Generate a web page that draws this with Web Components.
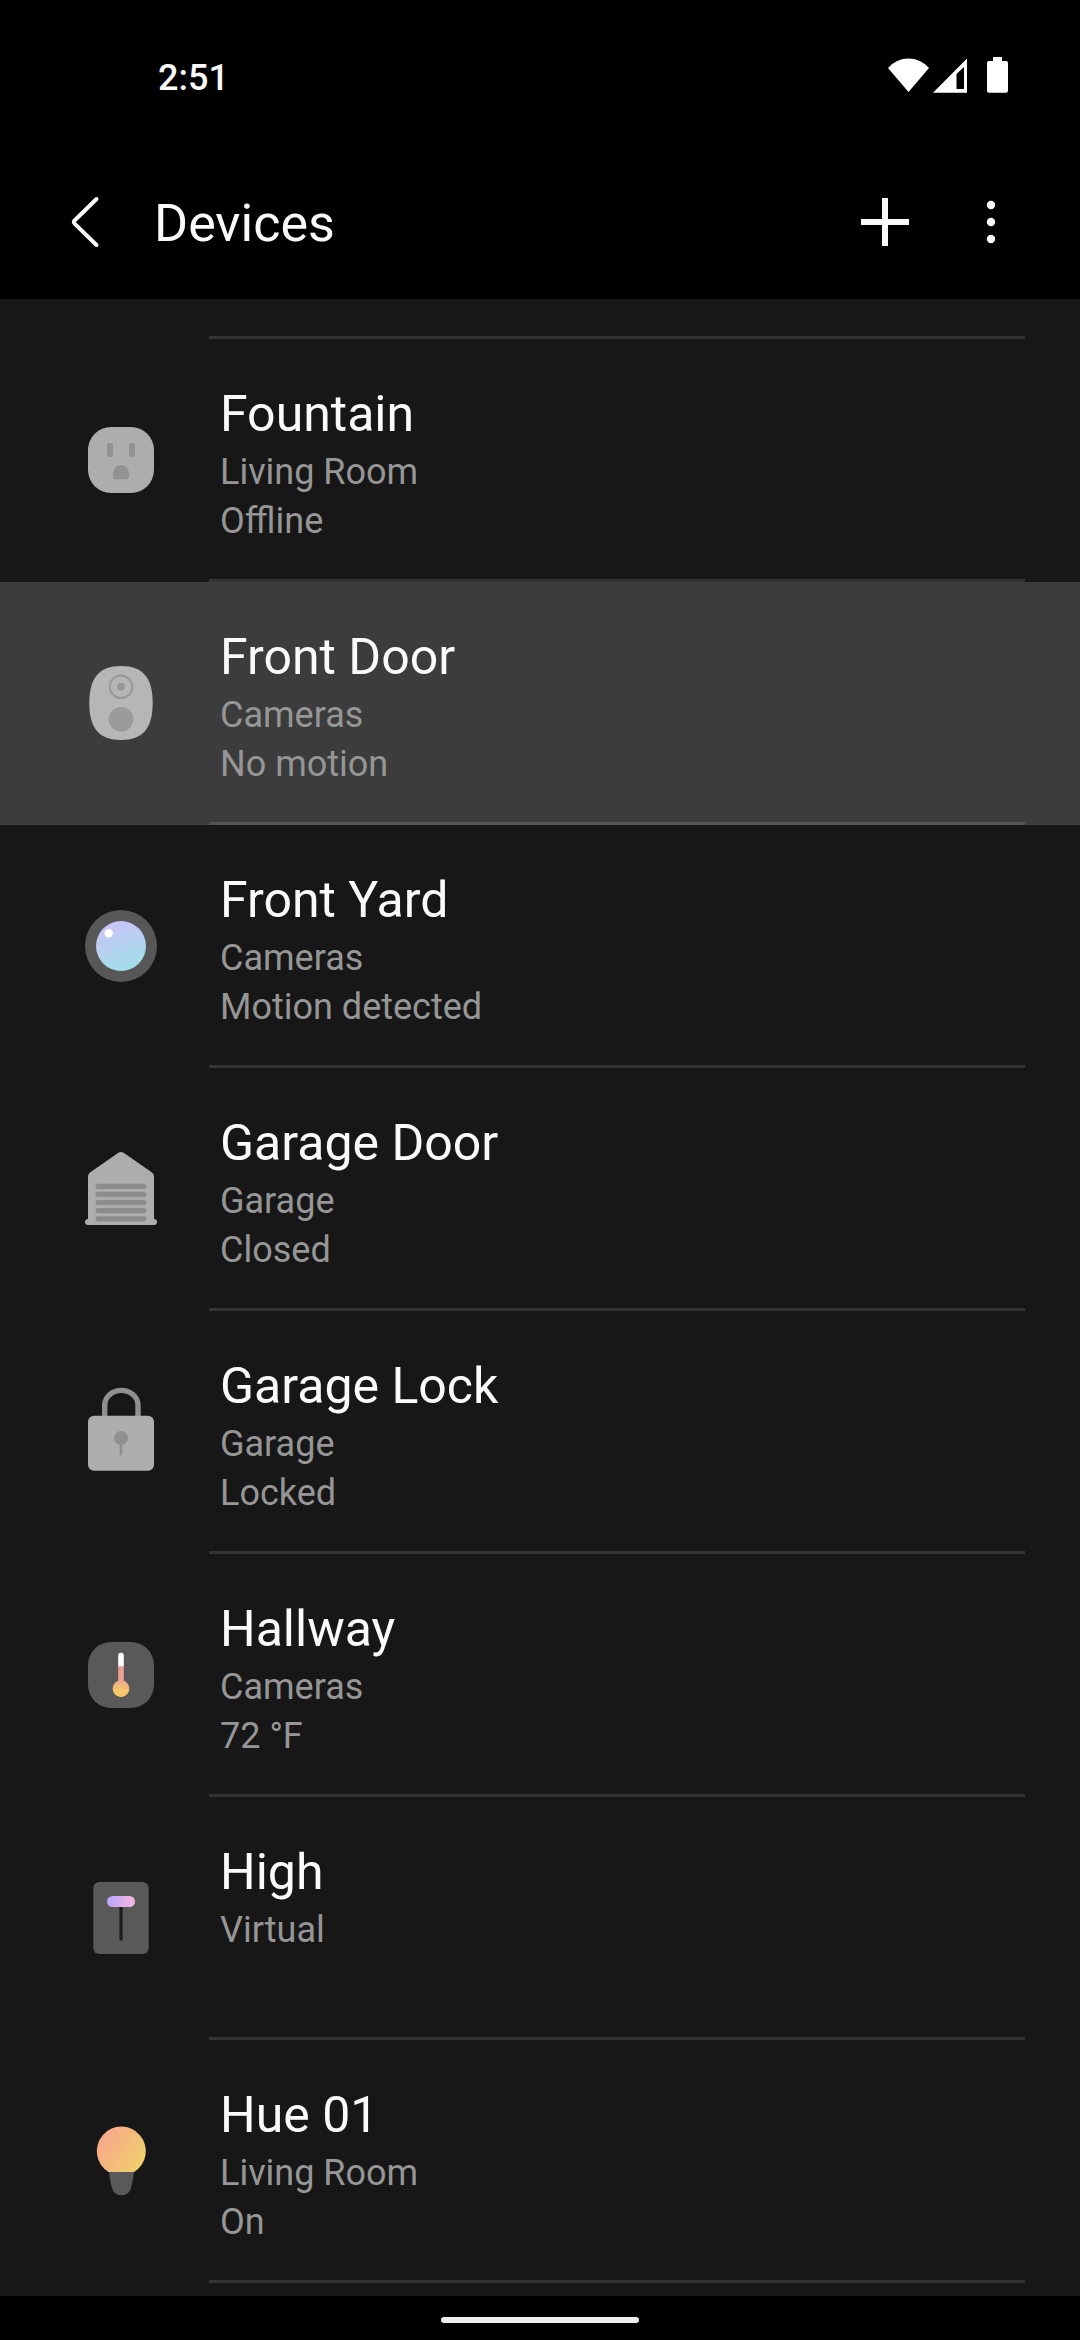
<!DOCTYPE html>
<html lang="en">
<head>
<meta charset="utf-8">
<meta name="viewport" content="width=device-width, initial-scale=1">
<title>Devices</title>
<style>
  body {
    margin: 0;
    background: #000;
    color: #fafafa;
    font-family: Roboto, "Liberation Sans", sans-serif;
  }
</style>
</head>
<body>
<devices-screen>
  <status-bar slot="status">2:51</status-bar>
  <app-header slot="header">Devices</app-header>
  <device-row icon="outlet">Fountain<span slot="room">Living Room</span><span slot="state">Offline</span></device-row>
  <device-row icon="doorbell" pressed>Front Door<span slot="room">Cameras</span><span slot="state">No motion</span></device-row>
  <device-row icon="camera">Front Yard<span slot="room">Cameras</span><span slot="state">Motion detected</span></device-row>
  <device-row icon="garage">Garage Door<span slot="room">Garage</span><span slot="state">Closed</span></device-row>
  <device-row icon="lock">Garage Lock<span slot="room">Garage</span><span slot="state">Locked</span></device-row>
  <device-row icon="thermometer">Hallway<span slot="room">Cameras</span><span slot="state">72 °F</span></device-row>
  <device-row icon="dimmer">High<span slot="room">Virtual</span></device-row>
  <device-row icon="bulb">Hue 01<span slot="room">Living Room</span><span slot="state">On</span></device-row>
</devices-screen>

<script>
/*
 * Device icons, all drawn on an 84 x 84 canvas.
 */
const ICONS = {
  outlet: `
    <rect x="9" y="9" width="66" height="66" rx="23" fill="#adadad"/>
    <rect x="28" y="25" width="6" height="14" rx="2" fill="#929292"/>
    <rect x="50" y="25" width="6" height="14" rx="2" fill="#929292"/>
    <path d="M34 59v-3.500a8 8.500 0 0 1 16 0V59q0 2.300-2.300 2.300H36.300Q34 61.300 34 59z" fill="#929292"/>`,
  doorbell: `
    <path d="M42 5c22 0 31.700 12 31.700 37S64 79 42 79 10.300 67 10.300 42 20 5 42 5z" fill="#b6b6b6"/>
    <circle cx="42" cy="25.700" r="11.300" fill="none" stroke="#989898" stroke-width="2"/>
    <circle cx="42" cy="25.700" r="4" fill="#989898"/>
    <circle cx="42" cy="58.300" r="12.300" fill="#9b9b9b"/>`,
  camera: `
    <linearGradient id="lens" x1=".3" y1="0" x2=".7" y2="1">
      <stop offset="0" stop-color="#cbc3f8"/><stop offset="1" stop-color="#9fe0e8"/>
    </linearGradient>
    <circle cx="42" cy="42" r="36" fill="#575757"/>
    <circle cx="42" cy="42" r="25" fill="url(#lens)"/>
    <circle cx="29.700" cy="29.300" r="4.200" fill="#fff"/>`,
  garage: `
    <path d="M39 6q3-2 6 0l28 19.500q2 1.500 2 4V72q3 0 3 3t-3 3H9q-3 0-3-3t3-3V29.500q0-2.500 2-4z" fill="#adadad"/>
    <path d="M19 39.300h46M19 47.400h46M19 55.500h46M19 63.600h46M19 71.800h46" stroke="#8d8d8d" stroke-width="5.200" stroke-linecap="round"/>`,
  lock: `
    <path d="M25.700 30V15a16.400 14.400 0 0 1 33.300 0v15" fill="none" stroke="#8f8f8f" stroke-width="5.400"/>
    <rect x="9" y="25.700" width="66" height="55" rx="6" fill="#aeaeae"/>
    <circle cx="42" cy="48" r="7" fill="#919191"/>
    <path d="M42 50v14" stroke="#919191" stroke-width="3" stroke-linecap="round"/>`,
  thermometer: `
    <linearGradient id="heat" x1="0" y1="0" x2="0" y2="1">
      <stop offset="0" stop-color="#e99a9d"/><stop offset=".45" stop-color="#eda58f"/><stop offset=".8" stop-color="#f7c86a"/>
    </linearGradient>
    <rect x="9" y="9" width="66" height="66" rx="23" fill="#595959"/>
    <path d="M39.200 34V22.500a2.800 2.800 0 0 1 5.600 0V34z" fill="#fff"/>
    <path d="M39.200 33.300h5.600v14.500a8.300 8.300 0 1 1-5.600 0z" fill="url(#heat)"/>`,
  dimmer: `
    <linearGradient id="knob">
      <stop offset="0" stop-color="#b9a4fd"/><stop offset="1" stop-color="#f6b8e2"/>
    </linearGradient>
    <rect x="14.300" y="6" width="55.400" height="72" rx="6" fill="#595959"/>
    <path d="M42 26v37" stroke="#1d1d1d" stroke-width="3.200" stroke-linecap="round"/>
    <rect x="28" y="20" width="28" height="11" rx="5.500" fill="url(#knob)"/>`,
  bulb: `
    <linearGradient id="glow" x1="0" y1=".2" x2="1" y2=".8">
      <stop offset="0" stop-color="#f8a58c"/><stop offset="1" stop-color="#efd06c"/>
    </linearGradient>
    <path d="M29.500 53a24.500 24.500 0 1 1 25.600 0z" fill="url(#glow)"/>
    <path d="M30 53h25q-1.500 12-3.500 17.500-2.300 5.800-9 5.800t-9-5.800Q31.500 65 30 53z" fill="#595959"/>`
}

/**
 * Base class that clones its markup into an open shadow root.
 */
class BaseElement extends HTMLElement {
  /**
   * Creates an instance of the current type.
   */
  constructor () {
    super()

    const template = document.createElement('template')
    template.innerHTML = this.constructor.markup
    this.attachShadow({ mode: 'open' })
      .appendChild(template.content.cloneNode(true))
  }
}

/*
 * The whole screen: status, header, scrolling list and gesture bar.
 */
customElements.define('devices-screen',
  class extends BaseElement {
    static markup = `
      <style>
        :host {
          display: flex;
          flex-direction: column;
          min-height: 100vh;
        }
        main {
          flex: 1;
          background: #171717;
        }
        .previous {
          height: 37px;
          margin: 0 55px 0 209px;
          border-bottom: 3px solid #333;
        }
        footer {
          display: flex;
          justify-content: center;
          padding: 21px 0 17px;
        }
        .pill {
          width: 198px;
          height: 6px;
          border-radius: 3px;
          background: #ececec;
        }
      </style>
      <slot name="status"></slot>
      <slot name="header"></slot>
      <main>
        <div class="previous"></div>
        <slot></slot>
      </main>
      <footer><div class="pill"></div></footer>
    `
  }
)

/*
 * The system status bar.
 */
customElements.define('status-bar',
  class extends BaseElement {
    static markup = `
      <style>
        :host {
          display: flex;
          justify-content: space-between;
          box-sizing: border-box;
          height: 145px;
          padding: 56px 72px 0 158px;
          font-size: 36px;
          font-weight: 500;
          line-height: 44px;
        }
        .icons, .network {
          display: flex;
        }
        .icons {
          gap: 20px;
        }
        .network {
          gap: 4px;
        }
        svg {
          height: 44px;
          fill: #fff;
        }
      </style>
      <span><slot></slot></span>
      <div class="icons">
        <div class="network">
          <svg width="41" viewBox="0 0 41 44"><path d="M20.500 36 0 12a27 27 0 0 1 41 0z"/></svg>
          <svg width="34" viewBox="0 0 34 44"><path fill-rule="evenodd" d="M0 36.700 34 2.500v34.200zM23.500 33H31V11l-7.500 7z"/></svg>
        </div>
        <svg width="21" viewBox="0 0 21 44"><path d="M6 1h9v4h4q2 0 2 2v27.700q0 2-2 2H2q-2 0-2-2V7q0-2 2-2h4z"/></svg>
      </div>
    `
  }
)

/*
 * The title bar with its actions.
 */
customElements.define('app-header',
  class extends BaseElement {
    static markup = `
      <style>
        :host {
          display: flex;
          align-items: center;
          height: 154px;
          padding: 0 36px 0 32px;
        }
        h1 {
          flex: 1;
          margin: 0;
          padding: 4px 0 0 16px;
          font-size: 52px;
          font-weight: 400;
          line-height: 62px;
        }
        button {
          display: flex;
          align-items: center;
          justify-content: center;
          width: 106px;
          height: 106px;
          padding: 0;
          border: 0;
          background: none;
          color: inherit;
        }
        svg {
          width: 60px;
          height: 60px;
          fill: none;
          stroke: currentColor;
        }
      </style>
      <button type="button" aria-label="Back">
        <svg viewBox="0 0 60 60"><path d="M41.500 7 19.800 28.200q-1.800 1.800 0 3.600L41.500 53" stroke-width="4" stroke-linecap="round"/></svg>
      </button>
      <h1><slot></slot></h1>
      <button type="button" aria-label="Add device">
        <svg viewBox="0 0 60 60"><path d="M30 6v48M6 30h48" stroke-width="6"/></svg>
      </button>
      <button type="button" aria-label="More options">
        <svg viewBox="0 0 60 60"><path d="M30 13h0M30 30h0M30 47h0" stroke-width="8.400" stroke-linecap="round"/></svg>
      </button>
    `
  }
)

/*
 * One device in the list.
 */
customElements.define('device-row',
  class extends BaseElement {
    static markup = `
      <style>
        :host {
          display: block;
        }
        :host([pressed]) {
          background: #3c3c3c;
        }
        button {
          display: flex;
          align-items: flex-start;
          width: 100%;
          padding: 0 55px 0 79px;
          border: 0;
          background: none;
          color: inherit;
          font: inherit;
          text-align: left;
        }
        svg {
          flex: none;
          width: 84px;
          height: 84px;
          margin: 79px 46px 0 0;
          overflow: visible;
        }
        .text {
          flex: 1;
          box-sizing: border-box;
          min-height: 243px;
          padding: 45px 0 33px 11px;
          border-bottom: 3px solid rgba(255, 255, 255, .12);
        }
        .name, .detail {
          display: block;
        }
        .name {
          margin-bottom: 4px;
          font-size: 50px;
          line-height: 60px;
        }
        .detail {
          color: #969696;
          font-size: 36px;
          line-height: 49px;
        }
      </style>
      <button type="button">
        <svg viewBox="0 0 84 84" aria-hidden="true"></svg>
        <span class="text">
          <span class="name"><slot></slot></span>
          <span class="detail"><slot name="room"></slot></span>
          <span class="detail"><slot name="state"></slot></span>
        </span>
      </button>
    `

    /**
     * Called after the element is inserted into the DOM.
     */
    connectedCallback () {
      this.shadowRoot.querySelector('svg').innerHTML = ICONS[this.getAttribute('icon')] ?? ''
    }
  }
)
</script>
</body>
</html>
